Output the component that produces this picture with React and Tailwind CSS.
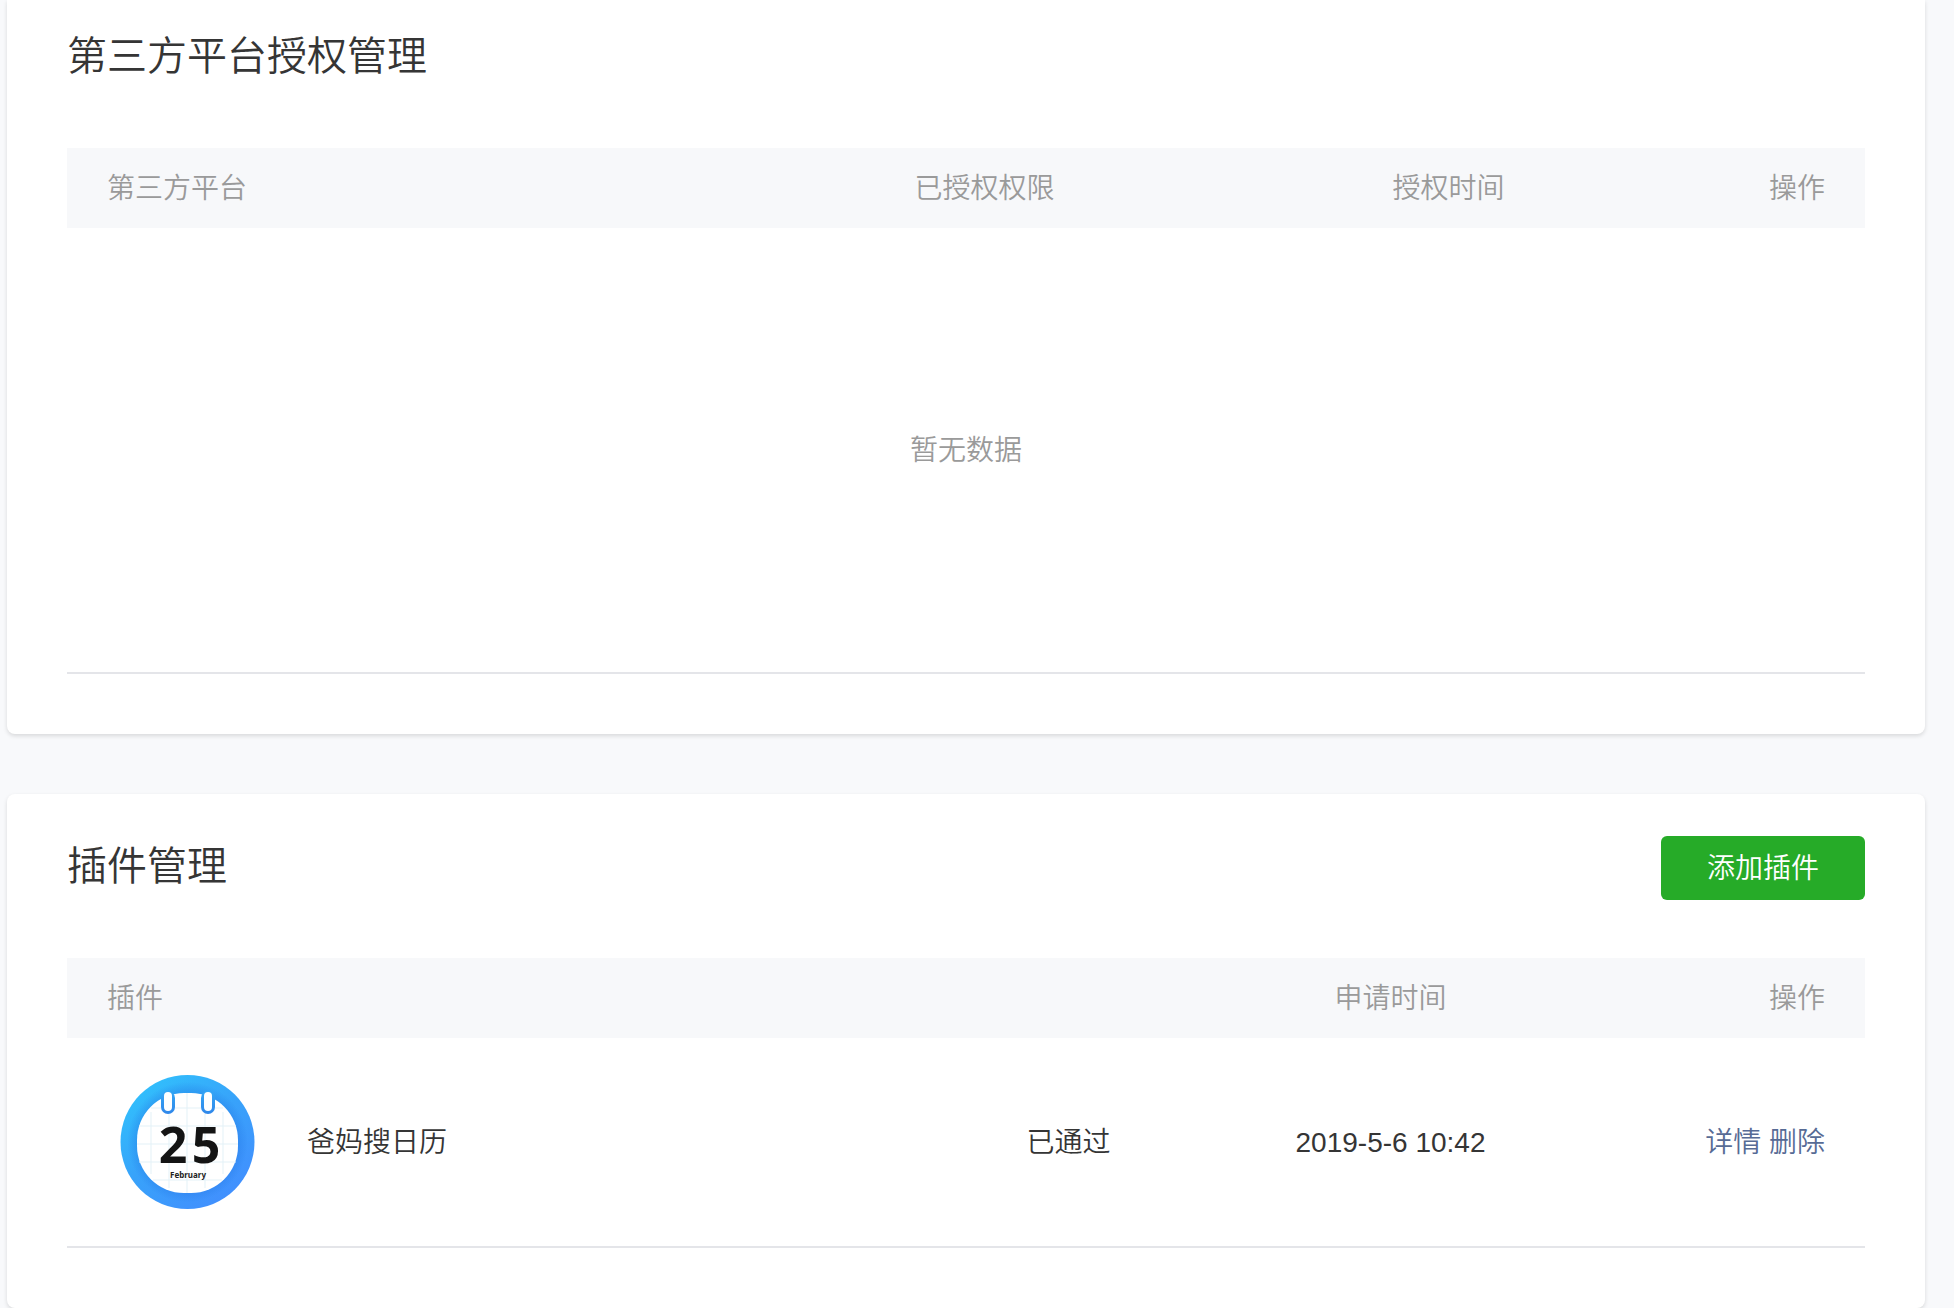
import React from "react";

const plugins = [
  {
    id: 1,
    name: "爸妈搜日历",
    status: "已通过",
    time: "2019-5-6 10:42",
  },
];

const CalendarLogo = () => (
  <svg
    viewBox="0 0 160 160"
    className="w-40 h-40 shrink-0"
    role="img"
    aria-label="爸妈搜日历"
  >
    <defs>
      <linearGradient id="ring" x1="0.1" y1="0.1" x2="0.75" y2="0.95">
        <stop offset="0" stopColor="#31c0fc" />
        <stop offset="0.5" stopColor="#38a2fa" />
        <stop offset="1" stopColor="#4190fe" />
      </linearGradient>
      <linearGradient id="hook" x1="0" y1="0" x2="0" y2="1">
        <stop offset="0" stopColor="#35a8f5" />
        <stop offset="1" stopColor="#2f86ea" />
      </linearGradient>
      <radialGradient id="shade">
        <stop offset="0.76" stopColor="#1f6fe0" stopOpacity="0.3" />
        <stop offset="0.9" stopColor="#1f6fe0" stopOpacity="0" />
      </radialGradient>
    </defs>
    <circle cx="80.5" cy="80" r="67" fill="url(#ring)" />
    <circle cx="80.5" cy="80" r="67" fill="url(#shade)" />
    <rect x="30" y="31" width="101" height="100" rx="47" fill="#fff" />
    <path
      d="M44 50V112M62 36V126M80 31V131M98 36V126M116 50V112M44 46H116M32 64H129M30 82H131M32 100H129M46 118H115"
      stroke="#e3f1f7"
      strokeWidth="1"
    />
    <rect x="54" y="29" width="14" height="23" rx="7" fill="url(#hook)" />
    <rect x="94" y="29" width="14" height="23" rx="7" fill="url(#hook)" />
    <rect x="57" y="30" width="8" height="19" rx="4" fill="#fff" />
    <rect x="97" y="30" width="8" height="19" rx="4" fill="#fff" />
    <g
      textAnchor="middle"
      className="font-['Noto_Sans'] text-[50px] font-bold"
      fill="#141414"
    >
      <text x="66" y="101">2</text>
      <text x="99" y="101">5</text>
    </g>
    <text
      x="81"
      y="116"
      textAnchor="middle"
      className="font-['Noto_Sans'] text-[8px] font-bold"
      fill="#222"
    >
      February
    </text>
  </svg>
);

const App = () => {
  return (
    <div className="min-h-screen bg-[#f8f9fb] pl-[7px] pr-[29px] font-['Liberation_Sans','Noto_Sans_CJK_SC',sans-serif] font-[350] text-[28px] leading-10 text-[#353535]">
      {/* Third-party platforms */}
      <section className="bg-white rounded-b-lg shadow-[0_2px_4px_rgba(0,0,0,0.13)] px-[60px] pt-[26px] pb-[60px]">
        <h2 className="text-[40px] leading-[60px] h-16">第三方平台授权管理</h2>
        <table className="w-full table-fixed mt-[58px]">
          <colgroup>
            <col className="w-[686px]" />
            <col className="w-[463px]" />
            <col className="w-[465px]" />
            <col className="w-[184px]" />
          </colgroup>
          <thead>
            <tr className="h-20 bg-[#f7f8fa] text-[#9a9a9a]">
              <th className="pt-0.5 pl-10 text-left font-[350]">第三方平台</th>
              <th className="pt-0.5 font-[350]">已授权权限</th>
              <th className="pt-0.5 font-[350]">授权时间</th>
              <th className="pt-0.5 pr-10 text-right font-[350]">操作</th>
            </tr>
          </thead>
          <tbody>
            <tr className="h-[445px] border-b-2 border-[#e4e5e9]">
              <td colSpan={4} className="pt-0.5 text-center text-[#9a9a9a]">
                暂无数据
              </td>
            </tr>
          </tbody>
        </table>
      </section>

      {/* Plugins */}
      <section className="mt-[60px] bg-white rounded-lg shadow-[0_2px_4px_rgba(0,0,0,0.13)] px-[60px] pt-[42px] pb-[60px]">
        <div className="flex justify-between">
          <h2 className="text-[40px] leading-[60px]">插件管理</h2>
          <button
            type="button"
            className="w-[204px] h-16 pt-0.5 rounded-md bg-[#26ab28] text-white"
          >
            添加插件
          </button>
        </div>
        <table className="w-full table-fixed mt-[58px]">
          <colgroup>
            <col className="w-[842px]" />
            <col className="w-[319px]" />
            <col className="w-[325px]" />
            <col className="w-[312px]" />
          </colgroup>
          <thead>
            <tr className="h-20 bg-[#f7f8fa] text-[#9a9a9a]">
              <th className="pt-0.5 pl-10 text-left font-[350]">插件</th>
              <th></th>
              <th className="pt-0.5 font-[350]">申请时间</th>
              <th className="pt-0.5 pr-10 text-right font-[350]">操作</th>
            </tr>
          </thead>
          <tbody>
            {plugins.map((item) => (
              <tr key={item.id} className="border-b-2 border-[#e4e5e9]">
                <td className="pl-10 py-6">
                  <div className="flex items-center gap-10">
                    <CalendarLogo />
                    <span className="pt-0.5">{item.name}</span>
                  </div>
                </td>
                <td className="pt-0.5 text-center">{item.status}</td>
                <td className="pt-0.5 text-center">{item.time}</td>
                <td className="pt-0.5 pr-10 text-right text-[#576b95]">
                  <a href="#detail">详情</a> <a href="#delete">删除</a>
                </td>
              </tr>
            ))}
          </tbody>
        </table>
      </section>
    </div>
  );
};

export default App;
